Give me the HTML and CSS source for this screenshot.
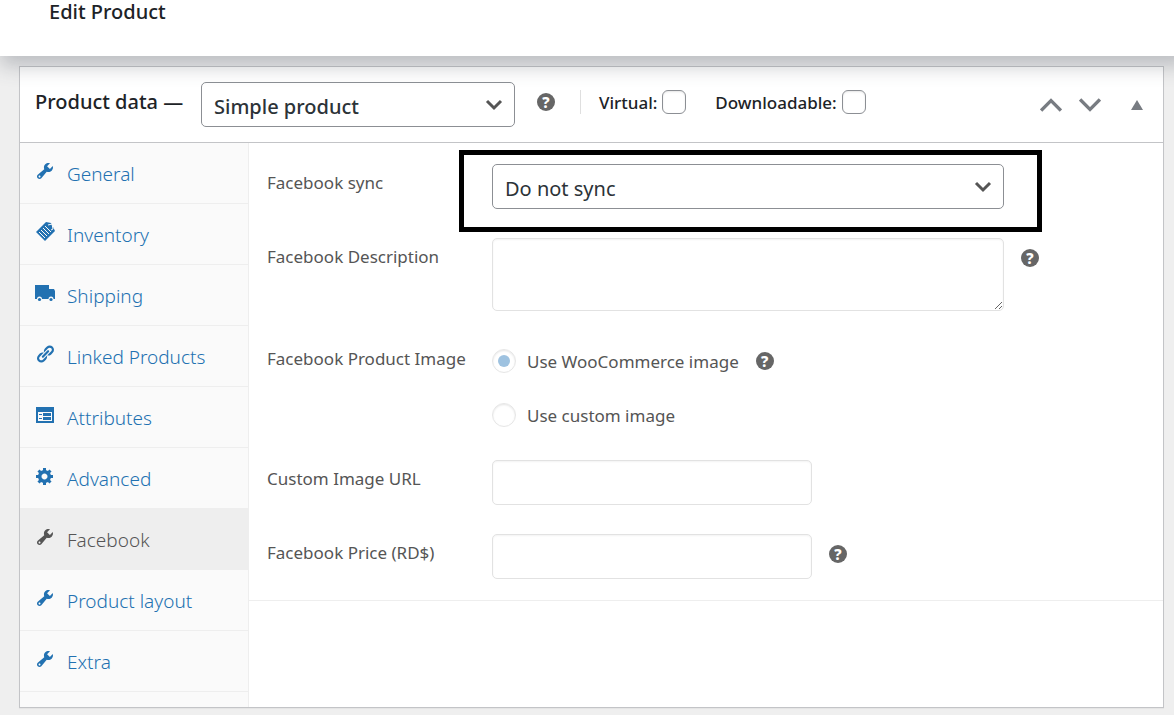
FILE: index.html
```html
<!DOCTYPE html>
<html lang="en">
<head>
    <meta charset="utf-8">
    <title>Edit Product</title>
    <link rel="stylesheet" href="styles.css">
</head>
<body>
    <!-- shared icons -->
    <svg class="sprite" width="0" height="0" aria-hidden="true">
        <symbol id="wrench" viewBox="0 0 20 20">
            <path d="M16.68 9.77c-1.34 1.34-3.3 1.67-4.95.99l-5.41 6.52c-.99.99-2.59.99-3.58 0s-.99-2.59 0-3.57l6.52-5.42c-.68-1.65-.35-3.61.99-4.95 1.28-1.28 3.12-1.62 4.72-1.06l-2.89 2.89 2.82 2.82 2.86-2.87c.53 1.58.18 3.39-1.08 4.65zM3.81 16.21c.4.39 1.04.39 1.43 0 .4-.4.4-1.04 0-1.43-.39-.4-1.03-.4-1.43 0-.39.39-.39 1.03 0 1.43z"/>
        </symbol>
        <symbol id="up" viewBox="0 0 20 20">
            <path d="M1 15l9-9 9 9" fill="none" stroke="currentColor" stroke-width="3"/>
        </symbol>
        <symbol id="down" viewBox="0 0 20 20">
            <path d="M1 5l9 9 9-9" fill="none" stroke="currentColor" stroke-width="3"/>
        </symbol>
    </svg>

    <header class="page-header">
        <h1>Edit Product</h1>
    </header>

    <main class="panel">
        <div class="panel-header">
            <h2>Product data —</h2>
            <select class="product-type" aria-label="Product type">
                <option>Simple product</option>
            </select>
            <span class="help">?</span>
            <div class="options">
                <label for="virtual">Virtual: <input type="checkbox" id="virtual"></label>
                <label for="downloadable">Downloadable: <input type="checkbox" id="downloadable"></label>
            </div>
            <div class="handles">
                <button type="button" aria-label="Move up"><svg width="22" height="22"><use href="#up"/></svg></button>
                <button type="button" aria-label="Move down"><svg width="22" height="22"><use href="#down"/></svg></button>
                <button type="button" class="toggle" aria-label="Toggle panel"><svg width="12" height="10" viewBox="0 0 12 10"><path d="M6 0l6 10H0z"/></svg></button>
            </div>
        </div>

        <div class="panel-body">
            <nav class="tabs">
                <a href="#general"><svg viewBox="0 0 20 20"><use href="#wrench"/></svg>General</a>
                <a href="#inventory">
                    <svg viewBox="0 0 20 20">
                        <path d="M11 0l5 1 4 8-10 10L1 10z"/>
                        <path d="M13 3l4-1 1 5-2 1" fill="none" stroke="#fafafa"/>
                        <path d="M4 10l6 6M6 8l6 6M8 6l6 6M10 4l6 6" fill="none" stroke="#fafafa" stroke-width="1"/>
                    </svg>Inventory</a>
                <a href="#shipping">
                    <svg viewBox="0 0 20 20">
                        <path d="M0 2h14v4h5l1 2v8h-1.500a2.500 2.500 0 0 0-5 0H7a2.500 2.500 0 0 0-5 0H0z"/>
                        <circle cx="4.500" cy="16.500" r="1.600"/>
                        <circle cx="16" cy="16.500" r="1.600"/>
                    </svg>Shipping</a>
                <a href="#linked">
                    <svg viewBox="0 0 20 20">
                        <path d="M17.740 2.760c1.680 1.690 1.680 4.410 0 6.100l-1.530 1.520c-1.120 1.120-2.700 1.470-4.140 1.090l2.620-2.610.76-.77.76-.76c.84-.84.84-2.200 0-3.040-.84-.85-2.200-.85-3.040 0l-.77.76-3.380 3.380c-.37-1.440-.02-3.020 1.100-4.140l1.520-1.530c1.690-1.680 4.420-1.680 6.100 0zM8.590 13.430l5.340-5.340c.42-.42.42-1.100 0-1.520-.44-.43-1.130-.39-1.530 0l-5.330 5.340c-.42.42-.42 1.100 0 1.520.44.43 1.130.39 1.520 0zm-.76 2.290l4.140-4.150c.38 1.440.03 3.020-1.090 4.140l-1.520 1.530c-1.690 1.680-4.410 1.680-6.100 0-1.680-1.680-1.680-4.420 0-6.100l1.530-1.520c1.120-1.120 2.700-1.470 4.140-1.100l-4.140 4.150c-.85.84-.85 2.200 0 3.050.84.84 2.200.84 3.040 0z"/>
                    </svg>Linked Products</a>
                <a href="#attributes">
                    <svg viewBox="0 0 20 20">
                        <path fill-rule="evenodd" d="M1 2h18v16H1zM3 7v9h14V7z"/>
                        <path d="M4 9h3v1H4zM8 8h8v3H8zM4 13h3v1H4zM8 12h8v3H8z"/>
                    </svg>Attributes</a>
                <a href="#advanced">
                    <svg viewBox="0 0 20 20">
                        <path d="M18 12h-2.180c-.17.7-.44 1.350-.81 1.930l1.540 1.540-2.100 2.100-1.540-1.540c-.58.36-1.230.63-1.910.79V19H8v-2.180c-.68-.16-1.330-.43-1.910-.79l-1.540 1.540-2.120-2.120 1.540-1.540c-.36-.58-.63-1.230-.79-1.910H1V9.030h2.170c.16-.7.44-1.350.8-1.940L2.430 5.550l2.100-2.100 1.540 1.540c.58-.37 1.240-.64 1.930-.81V2h3v2.180c.68.16 1.330.43 1.910.79l1.540-1.540 2.120 2.120-1.540 1.540c.36.59.64 1.240.8 1.940H18V12zm-8.500 1.500c1.660 0 3-1.340 3-3s-1.340-3-3-3-3 1.340-3 3 1.340 3 3 3z"/>
                    </svg>Advanced</a>
                <a href="#facebook" class="active"><svg viewBox="0 0 20 20"><use href="#wrench"/></svg>Facebook</a>
                <a href="#layout"><svg viewBox="0 0 20 20"><use href="#wrench"/></svg>Product layout</a>
                <a href="#extra"><svg viewBox="0 0 20 20"><use href="#wrench"/></svg>Extra</a>
            </nav>

            <form class="fields">
                <div class="row">
                    <label class="name" for="sync">Facebook sync</label>
                    <div class="wide highlight">
                        <select id="sync">
                            <option>Do not sync</option>
                        </select>
                    </div>
                </div>
                <div class="row">
                    <label class="name" for="description">Facebook Description</label>
                    <textarea class="wide" id="description"></textarea>
                    <span class="help">?</span>
                </div>
                <div class="row images" role="radiogroup" aria-labelledby="image-label">
                    <span class="name" id="image-label">Facebook Product Image</span>
                    <div class="choices">
                        <div class="choice">
                            <input type="radio" id="woo" name="image" checked>
                            <label for="woo">Use WooCommerce image</label>
                            <span class="help">?</span>
                        </div>
                        <div class="choice">
                            <input type="radio" id="custom" name="image">
                            <label for="custom">Use custom image</label>
                        </div>
                    </div>
                </div>
                <div class="row">
                    <label class="name" for="url">Custom Image URL</label>
                    <input type="text" class="short" id="url">
                </div>
                <div class="row">
                    <label class="name" for="price">Facebook Price (RD$)</label>
                    <input type="text" class="short" id="price">
                    <span class="help">?</span>
                </div>
            </form>
        </div>
    </main>
</body>
</html>
```
FILE: styles.css
```css
*{
    box-sizing: border-box;
}

body{
    margin: 0;
    overflow-x: hidden;
    background-color: #efefef;
    color: #1d2327;
    font-family: "Noto Sans", "Open Sans", sans-serif;
    font-size: 17px;
}

.sprite{
    position: absolute;
}

svg{
    fill: currentColor;
}

h1, h2{
    margin: 0;
    font-size: 20px;
    font-weight: 500;
    line-height: 24px;
}

.page-header{
    position: relative;
    z-index: 2;
    height: 56px;
    margin-right: -16px;
    padding-left: 49px;
    background-color: white;
    box-shadow: 0 10px 20px rgba(70, 75, 90, 0.3);
}

.panel{
    margin: 10px 10px 7px 19px;
    border: 1px solid #c3c4c7;
    background-color: white;
    box-shadow: 0 1px 1px rgba(0, 0, 0, 0.04);
}

.panel-header{
    display: flex;
    align-items: flex-start;
    padding: 15px 20px 15px 15px;
    border-bottom: 1px solid #c3c4c7;
}

.panel-header h2{
    width: 166px;
    line-height: 40px;
}

input[type="text"], select, textarea{
    height: 45px;
    margin: 0;
    border: 1px solid #e2e2e2;
    border-radius: 5px;
    background-color: white;
    font-family: inherit;
    box-shadow: inset 0 1px 2px rgba(0, 0, 0, 0.05);
}

select{
    appearance: none;
    padding: 4px 36px 0 12px;
    border-color: #8c8f94;
    background: white url("data:image/svg+xml,%3Csvg xmlns='http://www.w3.org/2000/svg' width='18' height='12'%3E%3Cpath d='M2 2l7 7 7-7' fill='none' stroke='%23555' stroke-width='3'/%3E%3C/svg%3E") no-repeat right 11px center;
    color: #2c3338;
    font-size: 20px;
    box-shadow: none;
}

.product-type{
    width: 314px;
    font-weight: 500;
}

.help{
    flex: none;
    width: 18px;
    height: 18px;
    margin: 11px 0 0 17px;
    border-radius: 50%;
    background-color: #666666;
    color: white;
    font-size: 15px;
    font-weight: 800;
    line-height: 18px;
    text-align: center;
}

.panel-header .help{
    margin-left: 22px;
}

.options{
    display: flex;
    gap: 29px;
    margin: 8px 0 0 25px;
    padding-left: 18px;
    border-left: 1px solid #dfdfdf;
    font-weight: 500;
}

.options label{
    display: flex;
    align-items: center;
    gap: 5px;
}

input[type="checkbox"], input[type="radio"]{
    appearance: none;
    width: 24px;
    height: 24px;
    margin: 0;
    border: 1px solid #8c8f94;
    border-radius: 6px;
    background-color: white;
    box-shadow: inset 0 1px 2px rgba(0, 0, 0, 0.1);
}

.handles{
    display: flex;
    align-items: center;
    gap: 17px;
    height: 45px;
    margin-left: auto;
}

.handles button{
    display: flex;
    padding: 0;
    border: none;
    background: none;
    color: #787c82;
}

.handles .toggle{
    margin-left: 13px;
}

.panel-body{
    display: flex;
}

.tabs{
    flex: none;
    width: 229px;
    padding-bottom: 15px;
    border-right: 1px solid #eeeeee;
    background-color: #fafafa;
}

.tabs a{
    display: flex;
    align-items: center;
    gap: 12px;
    height: 61px;
    padding: 2px 0 0 15px;
    border-bottom: 1px solid #eeeeee;
    color: #2271b1;
    font-size: 19px;
    font-weight: 300;
    text-decoration: none;
}

.tabs svg{
    width: 20px;
    height: 20px;
    margin-bottom: 7px;
}

.tabs .active{
    background-color: #eeeeee;
    color: #555555;
}

.fields{
    flex: 1;
    align-self: flex-start;
    padding: 21px 0;
    border-bottom: 1px solid #eeeeee;
    color: #555555;
}

.row{
    display: flex;
    align-items: flex-start;
    margin-bottom: 29px;
}

.row:last-child{
    margin-bottom: 0;
}

.name{
    flex: none;
    width: 243px;
    padding-left: 18px;
    line-height: 38px;
}

.wide{
    width: 56%;
}

.short{
    width: 35%;
}

.highlight{
    position: relative;
}

.highlight select{
    display: block;
    width: 100%;
}

/* black frame round the sync field */
.highlight::after{
    content: "";
    position: absolute;
    top: -14px;
    right: -38px;
    bottom: -23px;
    left: -33px;
    border: 5px solid black;
    pointer-events: none;
}

textarea.wide{
    height: 73px;
}

.images{
    margin-bottom: 24px;
}

.choices{
    display: grid;
    gap: 12px;
}

.choice{
    display: flex;
    align-items: center;
    height: 42px;
}

.choice .help{
    margin-top: 0;
}

.choice label{
    margin-left: 11px;
}

input[type="radio"]{
    display: grid;
    place-items: center;
    border-color: #e6e6e6;
    border-radius: 50%;
}

input[type="radio"]:checked::before{
    content: "";
    width: 12px;
    height: 12px;
    border-radius: 50%;
    background-color: #9ec2e0;
}
```
